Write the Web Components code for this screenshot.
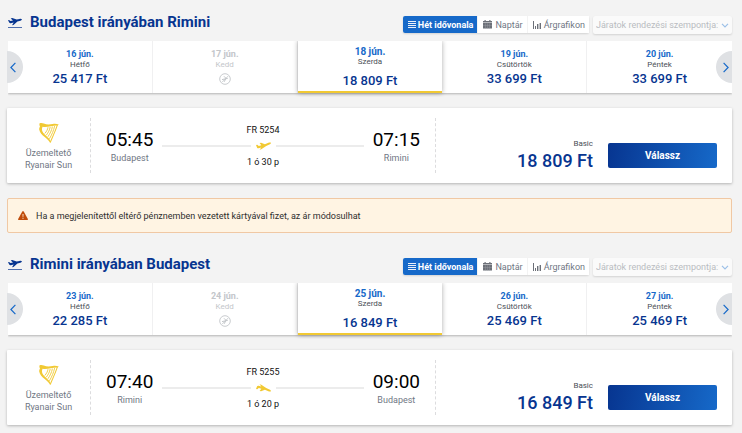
<!DOCTYPE html>
<html lang="hu">
<head>
<meta charset="utf-8">
<meta name="viewport" content="width=device-width, initial-scale=1">
<title>Járatválasztás</title>
<style>
  body { margin: 0; background: #f3f3f3; font-family: Roboto, "Liberation Sans", sans-serif; color: #2e2e2e; font-size: 9px; line-height: 12px; --navy: #073590; --blue: #1669c9; --gold: #f1c933; --grey: #707784; }
</style>
</head>
<body>
<flight-page>
  <journey-section>
    <journey-header slot="header" heading="Budapest irányában Rimini"></journey-header>
    <week-strip slot="days">
      <week-day date="16 jún." day="Hétfő" price="25 417 Ft"></week-day>
      <week-day date="17 jún." day="Kedd" unavailable></week-day>
      <week-day date="18 jún." day="Szerda" price="18 809 Ft" selected></week-day>
      <week-day date="19 jún." day="Csütörtök" price="33 699 Ft"></week-day>
      <week-day date="20 jún." day="Péntek" price="33 699 Ft"></week-day>
    </week-strip>
    <flight-card number="FR 5254" duration="1 ó 30 p" from="Budapest" to="Rimini" departs="05:45" arrives="07:15" price="18 809 Ft"></flight-card>
    <notice-bar>Ha a megjelenítettől eltérő pénznemben vezetett kártyával fizet, az ár módosulhat</notice-bar>
  </journey-section>
  <journey-section>
    <journey-header slot="header" heading="Rimini irányában Budapest"></journey-header>
    <week-strip slot="days">
      <week-day date="23 jún." day="Hétfő" price="22 285 Ft"></week-day>
      <week-day date="24 jún." day="Kedd" unavailable></week-day>
      <week-day date="25 jún." day="Szerda" price="16 849 Ft" selected></week-day>
      <week-day date="26 jún." day="Csütörtök" price="25 469 Ft"></week-day>
      <week-day date="27 jún." day="Péntek" price="25 469 Ft"></week-day>
    </week-strip>
    <flight-card number="FR 5255" duration="1 ó 20 p" from="Rimini" to="Budapest" departs="07:40" arrives="09:00" price="16 849 Ft" inbound></flight-card>
  </journey-section>
</flight-page>

<script>
const reset = `
  :host, *, *::before, *::after { box-sizing: border-box; }
  h2, p { margin: 0; }
  button, select { font: inherit; color: inherit; margin: 0; padding: 0; border: 0; background: none; }
  button { cursor: pointer; }
  svg { display: block; flex: none; }
`;
class Base extends HTMLElement {
  connectedCallback() {
    if (this.shadowRoot) return;
    this.attachShadow({ mode: 'open' }).innerHTML = `<style>${reset}${this.css()}</style>${this.html()}`;
  }
  at(name) { return this.getAttribute(name) || ''; }
}

customElements.define('flight-page', class extends Base {
  css() { return `:host { display: block; padding: 0 10px 0 7px; }`; }
  html() { return `<main><slot></slot></main>`; }
});

customElements.define('journey-section', class extends Base {
  css() { return `
    :host { display: block; }
    section { display: flex; flex-direction: column; gap: 15px; padding-bottom: 9px; }
    :host(:last-child) section { padding-bottom: 8px; }
  `; }
  html() { return `<section><div><slot name="header"></slot><slot name="days"></slot></div><slot></slot></section>`; }
});

customElements.define('journey-header', class extends Base {
  css() { return `
    :host { display: flex; justify-content: space-between; align-items: flex-start; height: 41px; }
    .title { display: flex; align-items: center; gap: 8px; padding: 12px 0 0 1px; color: var(--navy); }
    h2 { font-size: 15px; line-height: 20px; font-weight: 700; }
    .tools { display: flex; gap: 4px; padding-top: 16px; }
    .tabs { display: flex; gap: 1px; height: 17px; box-shadow: 0 1px 2px #0002; border-radius: 2px; }
    .tabs button { display: flex; align-items: center; gap: 3px; padding: 0 4px 0 5px; background: #fff; color: var(--grey); }
    .tabs button[aria-pressed=true] { background: var(--blue); color: #fff; font-weight: 700; gap: 2px; border-radius: 2px 0 0 2px; }
    .sort { display: grid; grid-template-columns: 1fr 8px; align-items: center; height: 18px; padding: 0 3px; background: #fafafa; box-shadow: 0 1px 2px #0002; border-radius: 2px; color: #b9bcc1; }
    select { appearance: none; opacity: 1; outline: 0; grid-area: 1 / 1 / 2 / 3; padding-right: 10px; }
    .sort svg { grid-area: 1 / 2; pointer-events: none; }
  `; }
  html() { return `
    <div class="title">
      <svg width="14" height="12" viewBox="0 0 14 12" fill="currentColor"><path d="M0 4.300l1-.2 1.500 1 2.500-.5L2.700 2.500 4.200 2l4.500 1.600 2.800-.7c1-.25 2.100-.05 2.400.45.100.5-.6 1.100-1.500 1.400L9.400 5.600 5.500 8.900l-1.500.3L5.700 6.500l-3 .7c-.6.1-1-.05-1.300-.4z"/><path d="M0 11h14v1H0z" opacity=".7"/></svg>
      <h2>${this.at('heading')}</h2>
    </div>
    <div class="tools">
      <div class="tabs">
        <button type="button" aria-pressed="true"><svg width="8" height="7" viewBox="0 0 8 7" fill="currentColor" opacity=".9"><path d="M0 0h8v1H0zM0 2h8v1H0zM0 4h8v1H0zM0 6h8v1H0z"/></svg>Hét idővonala</button>
        <button type="button" aria-pressed="false"><svg width="9" height="9" viewBox="0 0 9 9" fill="#6c7078"><path d="M0 1h1.5V0h1.200v1h3.600V0h1.200v1H9v1.400H0zM0 3h9v5.500H0z"/><path d="M0 5.500h9M2.500 3.400V8.500M4.500 3.400V8.500M6.500 3.400V8.500" stroke="#999da4" stroke-width=".4"/></svg>Naptár</button>
        <button type="button" aria-pressed="false"><svg width="8" height="9" viewBox="0 0 8 9" fill="#6c7078"><path d="M0 1h1v8H0zM2 6h1v3H2zM4 4h1.400v5H4zM6.600 3H8v6H6.600z"/></svg>Árgrafikon</button>
      </div>
      <div class="sort">
        <select disabled aria-label="Járatok rendezési szempontja"><option>Járatok rendezési szempontja:</option></select>
        <svg width="8" height="5" viewBox="0 0 8 5" fill="none" stroke="#9cc0e8" stroke-width="1.200"><path d="M1 .8l3 3 3-3"/></svg>
      </div>
    </div>`; }
});

customElements.define('week-strip', class extends Base {
  css() { return `
    :host { display: block; position: relative; }
    .days { display: grid; grid-template-columns: repeat(5, minmax(0, 1fr)); height: 52px; margin-left: 1px; background: #fff; box-shadow: 0 1px 2px #0004; clip-path: inset(0 0 -4px 0); }
    .nav { position: absolute; z-index: 3; top: 10px; width: 16px; height: 32px; display: flex; align-items: center; justify-content: center; background: #dfe1e4; color: var(--blue); }
    .prev { left: 0; border-radius: 0 16px 16px 0; padding-right: 4px; }
    .next { right: 0; border-radius: 16px 0 0 16px; padding-left: 4px; }
  `; }
  html() { return `
    <div class="days"><slot></slot></div>
    <button class="nav prev" type="button" aria-label="Előző napok"><svg width="6" height="11" viewBox="0 0 6 11" fill="none" stroke="currentColor" stroke-width="1.2"><path d="M5.4.8L.9 5.5l4.5 4.7"/></svg></button>
    <button class="nav next" type="button" aria-label="Következő napok"><svg width="6" height="11" viewBox="0 0 6 11" fill="none" stroke="currentColor" stroke-width="1.2"><path d="M.6.8l4.5 4.7-4.5 4.7"/></svg></button>`; }
});

customElements.define('week-day', class extends Base {
  css() { return `
    :host { display: grid; min-width: 0; }
    :host(:not(:last-child)) { border-right: 1px solid #f0f0f1; }
    :host([selected]) { position: relative; z-index: 2; background: #fff; border-right: 0; border-bottom: 2px solid var(--gold); box-shadow: 0 0 5px #0005; }
    button { display: flex; flex-direction: column; align-items: center; padding-top: 8px; }
    .date { font-size: 9px; line-height: 11px; font-weight: 700; color: var(--blue); }
    .day { font-size: 8px; line-height: 10px; color: #4b4f57; }
    .price { font-size: 13px; line-height: 18px; font-weight: 500; color: var(--navy); }
    :host([selected]) button { padding-top: 5px; }
    :host([selected]) .date { font-size: 10px; }
    :host([selected]) .price { padding-top: 5px; }
    :host([unavailable]) .date, :host([unavailable]) .day { color: #c3c6ca; }
    svg { margin-top: 3px; }
  `; }
  html() {
    const foot = this.hasAttribute('unavailable')
      ? `<svg width="12" height="12" viewBox="0 0 12 12" fill="none" stroke="#c3c6ca"><circle cx="6" cy="6" r="5.3" stroke-width=".9"/><path d="M3 9.2L9.2 3" stroke-width=".8"/><path d="M3 6.600l5.800-1.300M5 3.300l2.200 2.200M5.200 8.800l1.500-2.900" stroke-width="1"/></svg>`
      : `<span class="price">${this.at('price')}</span>`;
    return `<button type="button" ${this.hasAttribute('unavailable') ? 'disabled' : ''}><span class="date">${this.at('date')}</span><span class="day">${this.at('day')}</span>${foot}</button>`;
  }
});

customElements.define('flight-card', class extends Base {
  css() { return `
    :host { display: grid; grid-template-columns: 83px minmax(0, 346fr) minmax(0, 296fr); align-items: center; padding: 10px 0; background: #fff; box-shadow: 0 1px 3px #0004; border-radius: 1px; }
    .operator { display: flex; flex-direction: column; align-items: center; gap: 4px; text-align: center; color: var(--grey); padding-top: 2px; }
    .route { display: grid; grid-template-columns: auto minmax(0, 1fr) auto; align-items: center; gap: 9px; height: 55px; padding: 0 15px; border: dashed #dcdcde; border-width: 0 1px; }
    .stop { text-align: center; color: var(--grey); }
    .time { display: block; font-size: 19px; line-height: 24px; color: #000; }
    .leg { text-align: center; color: #111; display: grid; gap: 5px; }
    .line { display: flex; align-items: center; gap: 5px; height: 10px; }
    .line::before, .line::after { content: ""; flex: 1; height: 2px; background: #ececec; }
    .buy { display: grid; grid-template-columns: minmax(0, 1fr) 109px; gap: 15px; align-items: center; padding-right: 15px; padding-top: 20px; }
    .fare { text-align: right; font-size: 8px; line-height: 10px; color: #4b4f57; }
    .fare strong { display: block; font-size: 18px; line-height: 24px; font-weight: 500; color: var(--navy); }
    .buy button { height: 25px; border-radius: 2px; background: linear-gradient(100deg, var(--navy), var(--blue)); color: #fff; font-size: 10px; font-weight: 700; }
  `; }
  html() {
    const tilt = this.hasAttribute('inbound') ? 'matrix(1 0 0 -1 0 8)' : '';
    return `
    <div class="operator">
      <svg width="20" height="20" viewBox="0 0 20 20"><path fill="#f1c933" d="M.7.3C2-.1 3.400 0 4.800.6c3 1.200 6.400.8 9 .4 2-.3 4-.2 6 .5l-1.200 1.100C14 2.300 8 4.800 3.600 3.800 2.300 6.300 3 8.700 5.500 11.300c1.800 1.800 3.900 3.300 5.500 5.700l.3 3C10.200 17.800 8.200 16 5.700 14 3.100 12 .8 9.500.2 6.400c-.1-1 .1-1.800.8-2.700C.8 2.700-.1 1.600.7.3z"/><path fill="none" stroke="#f1c933" stroke-width="1.100" d="M18.300 2C17.600 5 14.500 12 11.200 19.500"/><path fill="none" stroke="#f1c933" stroke-width=".9" d="M9 4.200C8.700 6.500 7.500 8.500 5.800 10.500M11.200 4C10.600 7 9.200 9.700 7.300 12.200M13.400 3.600C12.700 7.500 10.900 10.800 8.900 13.800M15.600 3.100C14.700 7.500 12.700 12 10.400 15.800"/></svg>
      <p>Üzemeltető<br>Ryanair Sun</p>
    </div>
    <div class="route">
      <div class="stop"><time class="time">${this.at('departs')}</time>${this.at('from')}</div>
      <div class="leg">
        <span>${this.at('number')}</span>
        <div class="line"><svg width="15" height="8" viewBox="0 0 15 8" fill="#f1c933"><g transform="${tilt}"><path d="M0 3.100l1.300-.3 1.500 1.100 2.500-.6L3.600 1.100 5.100.7l3.800 1.500L12.400.7c1-.4 2.300-.4 2.500.1.200.5-.5 1.300-1.500 1.700L10.200 4 5.300 7.200l-1.800.5L5.300 5.500l-2.600.7c-.8.200-1.400 0-1.600-.5z"/></g></svg></div>
        <span>${this.at('duration')}</span>
      </div>
      <div class="stop"><time class="time">${this.at('arrives')}</time>${this.at('to')}</div>
    </div>
    <div class="buy">
      <div class="fare">Basic<strong>${this.at('price')}</strong></div>
      <button type="button">Válassz</button>
    </div>`; }
});

customElements.define('notice-bar', class extends Base {
  css() { return `
    :host { display: flex; align-items: center; gap: 8px; min-height: 35px; padding: 4px 10px; border: 1px solid #f0c8a4; border-radius: 2px; background: #fff4e3; }
  `; }
  html() { return `<svg width="10" height="9" viewBox="0 0 10 9"><path fill="#c04d0c" d="M4.400.3h1.200L10 8.200 9.600 9H.4L0 8.200z"/><path fill="#fff4e3" d="M4.500 3h1l-.2 3h-.6zM4.500 6.800h1v1h-1z"/></svg><p><slot></slot></p>`; }
});
</script>
</body>
</html>
